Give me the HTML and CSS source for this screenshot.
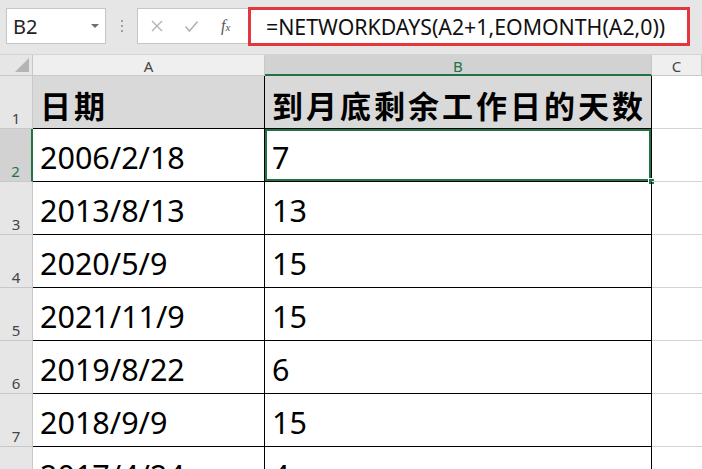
FILE: index.html
```html
<!DOCTYPE html>
<html lang="zh-CN">
<head>
  <meta charset="UTF-8">
  <meta name="viewport" content="width=device-width, initial-scale=1.0">
  <title>到月底剩余工作日</title>
  <link rel="stylesheet" href="styles.css">
</head>
<body>
  <div class="toolbar">
    <div class="name-box">
      <span class="name-text">B2</span>
      <span class="name-arrow"></span>
    </div>
    <div class="grip">
      <span></span><span></span><span></span>
    </div>
    <div class="formula-bar">
      <div class="formula-icons">
        <svg class="ico" width="14" height="14" viewBox="0 0 14 14">
          <path d="M2 2 L12 12 M12 2 L2 12" stroke="#b3b3b3" stroke-width="1.4" fill="none"/>
        </svg>
        <svg class="ico" width="15" height="13" viewBox="0 0 15 13">
          <path d="M1.5 6.5 L5.5 11 L13.5 1.5" stroke="#b3b3b3" stroke-width="1.6" fill="none"/>
        </svg>
        <span class="fx"><i>f</i><small>x</small></span>
      </div>
      <div class="formula-input">=NETWORKDAYS(A2+1,EOMONTH(A2,0))</div>
    </div>
  </div>

  <div class="sheet">
    <!-- column headers -->
    <div class="corner"><span class="corner-tri"></span></div>
    <div class="col-head">A</div>
    <div class="col-head selected">B</div>
    <div class="col-head">C</div>

    <div class="row-head">1</div>
    <div class="cell title">日期</div>
    <div class="cell title">到月底剩余工作日的天数</div>
    <div class="cell empty"></div>

    <div class="row-head selected">2</div>
    <div class="cell">2006/2/18</div>
    <div class="cell active">7</div>
    <div class="cell empty"></div>

    <div class="row-head">3</div>
    <div class="cell">2013/8/13</div>
    <div class="cell">13</div>
    <div class="cell empty"></div>

    <div class="row-head">4</div>
    <div class="cell">2020/5/9</div>
    <div class="cell">15</div>
    <div class="cell empty"></div>

    <div class="row-head">5</div>
    <div class="cell">2021/11/9</div>
    <div class="cell">15</div>
    <div class="cell empty"></div>

    <div class="row-head">6</div>
    <div class="cell">2019/8/22</div>
    <div class="cell">6</div>
    <div class="cell empty"></div>

    <div class="row-head">7</div>
    <div class="cell">2018/9/9</div>
    <div class="cell">15</div>
    <div class="cell empty"></div>

    <div class="row-head">8</div>
    <div class="cell">2017/4/24</div>
    <div class="cell">4</div>
    <div class="cell empty"></div>
  </div>
</body>
</html>
```

FILE: styles.css
```css
body {
  margin: 0;
  padding: 0;
  width: 702px;
  height: 469px;
  overflow: hidden;
  background-color: #ffffff;
  font-family: "Noto Sans", "Noto Sans CJK SC", sans-serif;
  color: #000;
}

.toolbar {
  height: 55px;
  box-sizing: border-box;
  background-color: #e6e6e6;
  border-bottom: 1px solid #d4d4d4;
  display: flex;
  align-items: flex-start;
  padding-top: 8px;
  padding-left: 6px;
}

.name-box {
  width: 100px;
  height: 36px;
  box-sizing: border-box;
  background: #fff;
  border: 1px solid #c6c6c6;
  display: flex;
  align-items: center;
  justify-content: space-between;
  padding: 0 6px 0 6px;
}

.name-text {
  font-size: 20px;
  color: #222;
}

.name-arrow {
  width: 0;
  height: 0;
  border-left: 4px solid transparent;
  border-right: 4px solid transparent;
  border-top: 4px solid #6d6d6d;
}

.grip {
  width: 31px;
  height: 36px;
  display: flex;
  flex-direction: column;
  align-items: center;
  justify-content: center;
  gap: 3px;
}

.grip span {
  width: 2px;
  height: 2px;
  background: #a0a0a0;
}

.formula-bar {
  flex: 1;
  display: flex;
  align-items: flex-start;
}

.formula-icons {
  width: 111px;
  height: 36px;
  box-sizing: border-box;
  background: #fff;
  border: 1px solid #c6c6c6;
  border-right: none;
  display: flex;
  align-items: center;
  padding-left: 12px;
  gap: 20px;
}

.fx {
  font-family: "Liberation Serif", serif;
  font-size: 16px;
  color: #555;
  margin-left: 2px;
}

.fx small {
  font-size: 11px;
  font-style: italic;
}

.formula-input {
  width: 442px;
  height: 39px;
  margin-top: -1px;
  box-sizing: border-box;
  background: #fff;
  border: 3px solid #e3373d;
  font-size: 21.3px;
  line-height: 33px;
  padding-left: 15px;
  color: #111;
  white-space: nowrap;
}

.sheet {
  display: grid;
  grid-template-columns: 33px 232px 387px 1fr;
  grid-template-rows: 21px repeat(8, 53px);
}

.corner {
  background: #e6e6e6;
  border-right: 1px solid #c8c8c8;
  border-bottom: 1px solid #c8c8c8;
  box-sizing: border-box;
  display: flex;
  align-items: flex-end;
  justify-content: flex-end;
  padding: 0 3px 3px 0;
}

.corner-tri {
  width: 0;
  height: 0;
  border-left: 14px solid transparent;
  border-bottom: 14px solid #b4b4b4;
}

.col-head {
  background: #efefef;
  border-right: 1px solid #c8c8c8;
  border-bottom: 1px solid #c8c8c8;
  box-sizing: border-box;
  font-size: 15px;
  color: #444;
  text-align: center;
  line-height: 22px;
}

.col-head.selected {
  background: #d2d2d2;
  color: #217346;
  border-bottom: 2px solid #217346;
}

.row-head {
  background: #e6e6e6;
  border-right: 1px solid #c8c8c8;
  border-bottom: 1px solid #c8c8c8;
  box-sizing: border-box;
  font-size: 15px;
  color: #444;
  display: flex;
  align-items: flex-end;
  justify-content: center;
  padding-bottom: 0;
}

.row-head.selected {
  background: #d2d2d2;
  color: #217346;
  border-right: 2px solid #217346;
}

.cell {
  border-right: 1px solid #000;
  border-bottom: 1px solid #000;
  box-sizing: border-box;
  font-size: 30.5px;
  display: flex;
  align-items: flex-end;
  padding: 0 0 3px 7px;
  white-space: nowrap;
  position: relative;
}

.cell.title {
  background: #d9d9d9;
  font-family: "Noto Sans CJK SC", sans-serif;
  font-weight: bold;
  font-size: 31px;
  letter-spacing: 3px;
  padding-bottom: 1px;
}

.cell.empty {
  border-right: none;
  border-bottom: 1px solid #d4d4d4;
}

.cell.active {
  box-shadow: inset 0 0 0 2px #217346;
}

.cell.active::after {
  content: '';
  position: absolute;
  right: -4px;
  bottom: -4px;
  width: 7px;
  height: 7px;
  background: #217346;
  border: 1px solid #fff;
  box-sizing: border-box;
}
```
